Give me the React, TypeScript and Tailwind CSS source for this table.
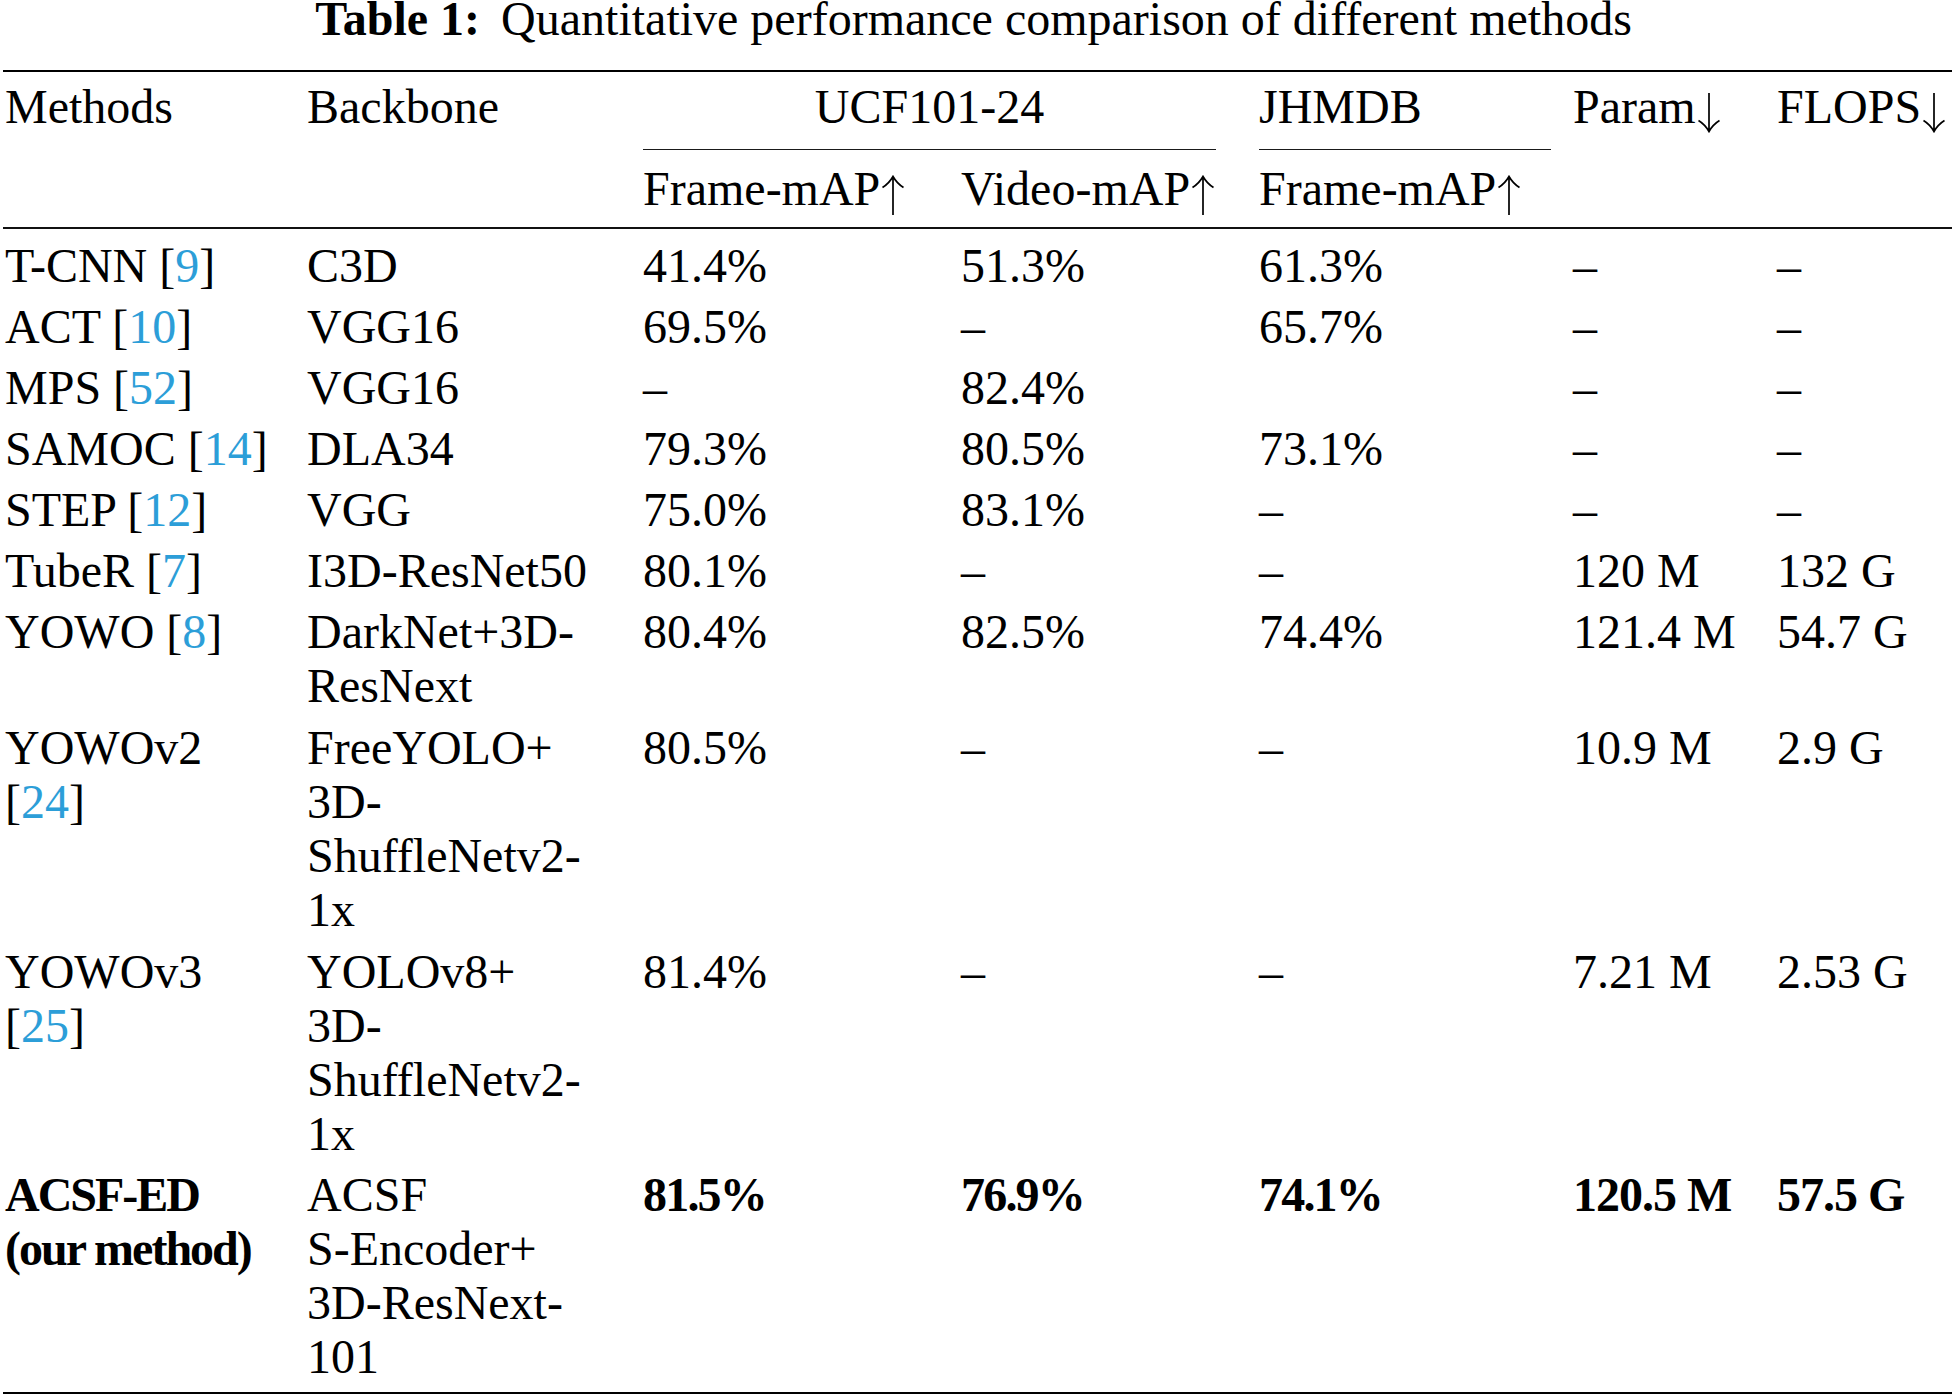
import React from 'react';

type Row = {
  method: React.ReactNode[];
  backbone: string[];
  ucfFrame: string;
  ucfVideo: string;
  jhmdb: string;
  param: string;
  flops: string;
  bold?: boolean;
};

const Cite = ({ n }: { n: string }) => (
  <>
    [<span className="text-[#2c9ed8]">{n}</span>]
  </>
);

// tall thin math-style arrow (\uparrow / \downarrow)
const Arrow = ({ up }: { up?: boolean }) => (
  <svg
    width="26"
    height="40"
    viewBox="0 0 26 40"
    className="inline-block align-[-10px]"
    fill="none"
    stroke="currentColor"
    strokeWidth="1.7"
  >
    {up ? (
      <path d="M13 1.5V40M2.5 12.5Q9 8.5 13 1.5Q17 8.5 23.5 12.5" />
    ) : (
      <path d="M13 0V38.5M2.5 27.5Q9 31.5 13 38.5Q17 31.5 23.5 27.5" />
    )}
  </svg>
);

const rows: Row[] = [
  { method: [<>T-CNN <Cite n="9" /></>], backbone: ['C3D'], ucfFrame: '41.4%', ucfVideo: '51.3%', jhmdb: '61.3%', param: '–', flops: '–' },
  { method: [<>ACT <Cite n="10" /></>], backbone: ['VGG16'], ucfFrame: '69.5%', ucfVideo: '–', jhmdb: '65.7%', param: '–', flops: '–' },
  { method: [<>MPS <Cite n="52" /></>], backbone: ['VGG16'], ucfFrame: '–', ucfVideo: '82.4%', jhmdb: '', param: '–', flops: '–' },
  { method: [<>SAMOC <Cite n="14" /></>], backbone: ['DLA34'], ucfFrame: '79.3%', ucfVideo: '80.5%', jhmdb: '73.1%', param: '–', flops: '–' },
  { method: [<>STEP <Cite n="12" /></>], backbone: ['VGG'], ucfFrame: '75.0%', ucfVideo: '83.1%', jhmdb: '–', param: '–', flops: '–' },
  { method: [<>TubeR <Cite n="7" /></>], backbone: ['I3D-ResNet50'], ucfFrame: '80.1%', ucfVideo: '–', jhmdb: '–', param: '120 M', flops: '132 G' },
  { method: [<>YOWO <Cite n="8" /></>], backbone: ['DarkNet+3D-', 'ResNext'], ucfFrame: '80.4%', ucfVideo: '82.5%', jhmdb: '74.4%', param: '121.4 M', flops: '54.7 G' },
  { method: ['YOWOv2', <Cite n="24" />], backbone: ['FreeYOLO+', '3D-', 'ShuffleNetv2-', '1x'], ucfFrame: '80.5%', ucfVideo: '–', jhmdb: '–', param: '10.9 M', flops: '2.9 G' },
  { method: ['YOWOv3', <Cite n="25" />], backbone: ['YOLOv8+', '3D-', 'ShuffleNetv2-', '1x'], ucfFrame: '81.4%', ucfVideo: '–', jhmdb: '–', param: '7.21 M', flops: '2.53 G' },
  {
    method: ['ACSF-ED', '(our method)'],
    backbone: ['ACSF', 'S-Encoder+', '3D-ResNext-', '101'],
    ucfFrame: '81.5%',
    ucfVideo: '76.9%',
    jhmdb: '74.1%',
    param: '120.5 M',
    flops: '57.5 G',
    bold: true,
  },
];

const grid = 'grid grid-cols-[307px_336px_318px_298px_314px_204px_1fr] leading-[54px] whitespace-nowrap';

export default function App() {
  return (
    <div className="w-[1955px] h-[1396px] overflow-hidden bg-white text-black font-['Liberation_Serif','Times_New_Roman',serif] text-[48px]">
      {/* Caption */}
      <p className="pt-[1px] leading-[36px] text-center pr-[8px] whitespace-nowrap">
        <b>Table 1:</b>
        <span className="ml-[9px]"> Quantitative performance comparison of different methods</span>
      </p>

      {/* Top rule */}
      <div className="mx-[3px] mt-[33px] h-[2px] bg-black" />

      {/* Header */}
      <div className={`${grid} mt-[8px]`}>
        <div className="pl-[5px]">Methods</div>
        <div>Backbone</div>
        <div className="col-span-2 pr-[43px] text-center">UCF101-24</div>
        <div>JHMDB</div>
        <div>
          Param<Arrow />
        </div>
        <div>
          FLOPS<Arrow />
        </div>

        <div className="col-start-3 col-span-2 mr-[43px] mt-[14.5px] h-[1.5px] bg-[#1a1a1a]" />
        <div className="mr-[22px] mt-[14.5px] h-[1.5px] bg-[#1a1a1a]" />
        <div className="col-span-2" />

        <div className="col-start-3 mt-[12px]">
          Frame-mAP<Arrow up />
        </div>
        <div className="mt-[12px]">
          Video-mAP<Arrow up />
        </div>
        <div className="mt-[12px]">
          Frame-mAP<Arrow up />
        </div>
      </div>

      {/* Mid rule */}
      <div className="mx-[3px] mt-[11px] h-[2px] bg-[#111]" />

      {/* Body */}
      <div className="pt-[6.5px]">
        {rows.map((r, i) => (
          <div
            key={i}
            className={`${grid} pt-[3.5px] ${r.backbone.length > 1 ? 'pb-[4.25px]' : 'pb-[3.5px]'} ${r.bold ? 'font-bold' : ''}`}
          >
            <div className={`pl-[5px] ${r.bold ? 'tracking-[-2px]' : ''}`}>
              {r.method.map((m, j) => (
                <div key={j}>{m}</div>
              ))}
            </div>
            <div className="font-normal">
              {r.backbone.map((b, j) => (
                <div key={j}>{b}</div>
              ))}
            </div>
            <div className={r.bold ? 'tracking-[-1.8px]' : ''}>{r.ucfFrame}</div>
            <div className={r.bold ? 'tracking-[-1.8px]' : ''}>{r.ucfVideo}</div>
            <div className={r.bold ? 'tracking-[-1.8px]' : ''}>{r.jhmdb}</div>
            <div className={r.bold ? 'tracking-[-1px]' : ''}>{r.param}</div>
            <div className={r.bold ? 'tracking-[-1px]' : ''}>{r.flops}</div>
          </div>
        ))}
      </div>

      {/* Bottom rule */}
      <div className="mx-[3px] mt-[3.5px] h-[2px] bg-black" />
    </div>
  );
}
